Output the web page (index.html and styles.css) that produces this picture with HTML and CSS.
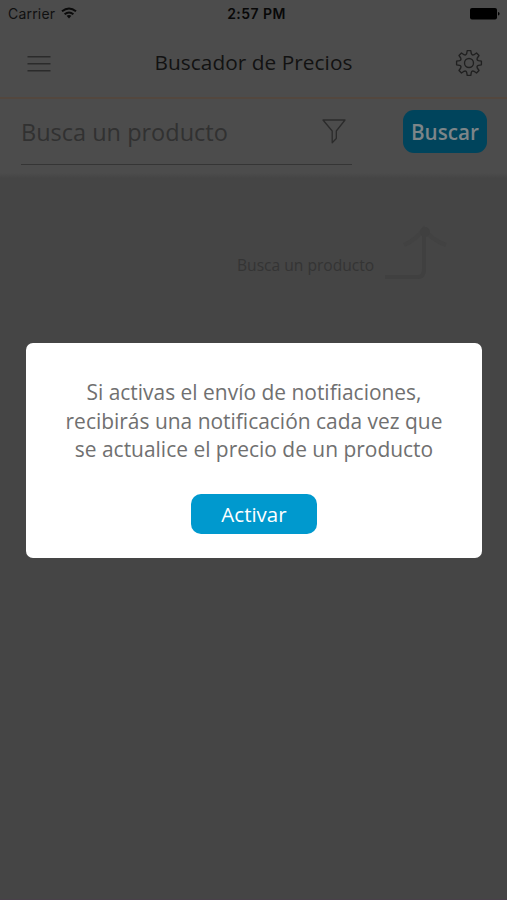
FILE: index.html
```html
<!DOCTYPE html>
<html lang="es">
<head>
<meta charset="utf-8">
<title>Buscador de Precios</title>
<link rel="stylesheet" href="styles.css">
</head>
<body>
<div class="app">
  <div class="status">
    <div class="carrier"><span class="carrier-name">Carrier</span>
      <svg class="wifi" viewBox="0 0 16 12" width="16" height="12"><g fill="none" stroke="#0b0b0b" stroke-width="2"><path d="M1 4.3Q8 -1.4 15 4.3"/><path d="M3.6 7.2Q8 3.7 12.4 7.2"/></g><path fill="#0b0b0b" d="M5.6 8.8Q8 7.2 10.4 8.8L8 11.4Z"/></svg>
    </div>
    <span class="clock">2:57 PM</span>
    <svg class="battery" viewBox="0 0 30 12" width="30" height="12"><rect width="27" height="11.5" rx="2" fill="#000"/><path d="M28 4Q29.6 4.3 29.6 5.8T28 7.6Z" fill="#000"/></svg>
  </div>
  <header class="nav">
    <svg class="menu" viewBox="0 0 24 18" width="24" height="18"><path d="M.5 1.7H23.5M.5 8.7H23.5M.5 15.8H23.5" stroke="#2b2b2b" stroke-width="1.6"/></svg>
    <h1 class="title">Buscador de Precios</h1>
    <svg class="gear" viewBox="-14 -14 28 28" width="28" height="28"><g fill="none" stroke="#202020" stroke-width="1.35" stroke-linejoin="round"><path d="M-1.8-12.4L1.8-12.4L2.3-9.4Q3.1-7.4 5-8.3L7.5-10L10-7.5L8.3-5Q7.4-3.1 9.4-2.3L12.4-1.8L12.4 1.8L9.4 2.3Q7.4 3.1 8.3 5L10 7.5L7.5 10L5 8.3Q3.1 7.4 2.3 9.4L1.8 12.4L-1.8 12.4L-2.3 9.4Q-3.1 7.4-5 8.3L-7.5 10L-10 7.5L-8.3 5Q-7.4 3.1-9.4 2.3L-12.4 1.8L-12.4-1.8L-9.4-2.3Q-7.4-3.1-8.3-5L-10-7.5L-7.5-10L-5-8.3Q-3.1-7.4-2.3-9.4Z"/><circle r="4.5"/></g></svg>
  </header>
  <section class="search">
    <div class="field"><span class="placeholder">Busca un producto</span>
      <svg class="filter" viewBox="0 0 26 28" width="26" height="28"><path d="M2 2H24L15.3 13V20.5L11.2 24.8V13Z" fill="none" stroke="#2b2b2b" stroke-width="1.3" stroke-linejoin="round"/></svg>
    </div>
    <div class="buscar"><span>Buscar</span></div>
  </section>
  <div class="hint"><span class="hint-text">Busca un producto</span>
    <svg class="arrow" viewBox="0 0 64 60" width="64" height="60"><g fill="none" stroke="#404040"><path d="M1 54H34Q40 54 40 46V7" stroke-width="4"/><path d="M20 22Q33 16 40 6Q48 17 62 22" stroke="#424242" stroke-width="4"/></g><circle cx="41" cy="9" r="5" fill="#404040"/></svg>
  </div>
  <main class="modal">
    <p class="message"><span>Si activas el envío de notifiaciones,</span><span>recibirás una notificación cada vez que</span><span>se actualice el precio de un producto</span></p>
    <div class="activar"><span>Activar</span></div>
  </main>
</div>
</body>
</html>
```
FILE: styles.css
```css
* { box-sizing: border-box; }
body { margin: 0; background: #454545; font-family: "Open Sans", "Noto Sans", sans-serif; }
.app { width: 507px; height: 900px; overflow: hidden; background: #454545; border-bottom: 1px solid #49404a; white-space: nowrap; }
svg { display: block; flex: none; }
.status { height: 28px; padding: 0 7px 2px 8px; display: grid; grid-template-columns: 1fr auto 1fr; align-items: center; background: #4c4c4c; font-family: Inter, "Liberation Sans", sans-serif; color: #101010; }
.carrier { display: flex; align-items: center; gap: 6px; font-size: 14px; letter-spacing: .2px; }
.wifi { margin-top: -1px; }
.clock { margin-left: 5px; font-size: 14px; font-weight: 600; letter-spacing: .45px; color: #080808; }
.battery { justify-self: end; margin-top: 1px; }
.nav { height: 71px; padding: 0 24px 0 27px; display: flex; align-items: center; justify-content: space-between; background: #4c4c4c; border-bottom: 2px solid #53473e; }
.title { margin: -2px 0 0 1px; font-size: 20.8px; letter-spacing: .05px; font-weight: 400; line-height: 28px; color: #121212; }
.menu { margin-top: 2px; }
.gear { margin-top: 1px; }
.search { height: 79px; padding: 11px 20px 0 21px; display: flex; justify-content: space-between; align-items: flex-start; background: linear-gradient(#4c4c4c 74px, #454545 79px); }
.field { width: 331px; height: 55px; padding: 0 5px 11px 0; display: flex; align-items: center; justify-content: space-between; border-bottom: 1px solid #353535; }
.placeholder { font-size: 23.5px; color: #313131; }
.buscar { width: 84px; height: 43px; display: flex; align-items: center; justify-content: center; border-radius: 11px; background: #00445c; color: #7d8588; font-size: 20.7px; font-weight: 600; }
.hint { height: 165px; padding: 45px 59px 0 237px; display: flex; align-items: flex-start; justify-content: space-between; }
.hint-text { margin-top: 31px; font-size: 15.6px; line-height: 22px; color: #343434; }
.modal { width: 456px; height: 215px; margin-left: 26px; padding: 35px 0 0; border-radius: 7px; background: #fff; display: flex; flex-direction: column; align-items: center; }
.message { margin: 0; display: flex; flex-direction: column; align-items: center; font-size: 20.95px; line-height: 28.5px; color: #707070; }
.activar { width: 126px; height: 40px; margin-top: 30.5px; padding-bottom: 1px; display: flex; align-items: center; justify-content: center; border-radius: 10px; background: #0099ce; color: #fff; font-size: 20.5px; }
```
